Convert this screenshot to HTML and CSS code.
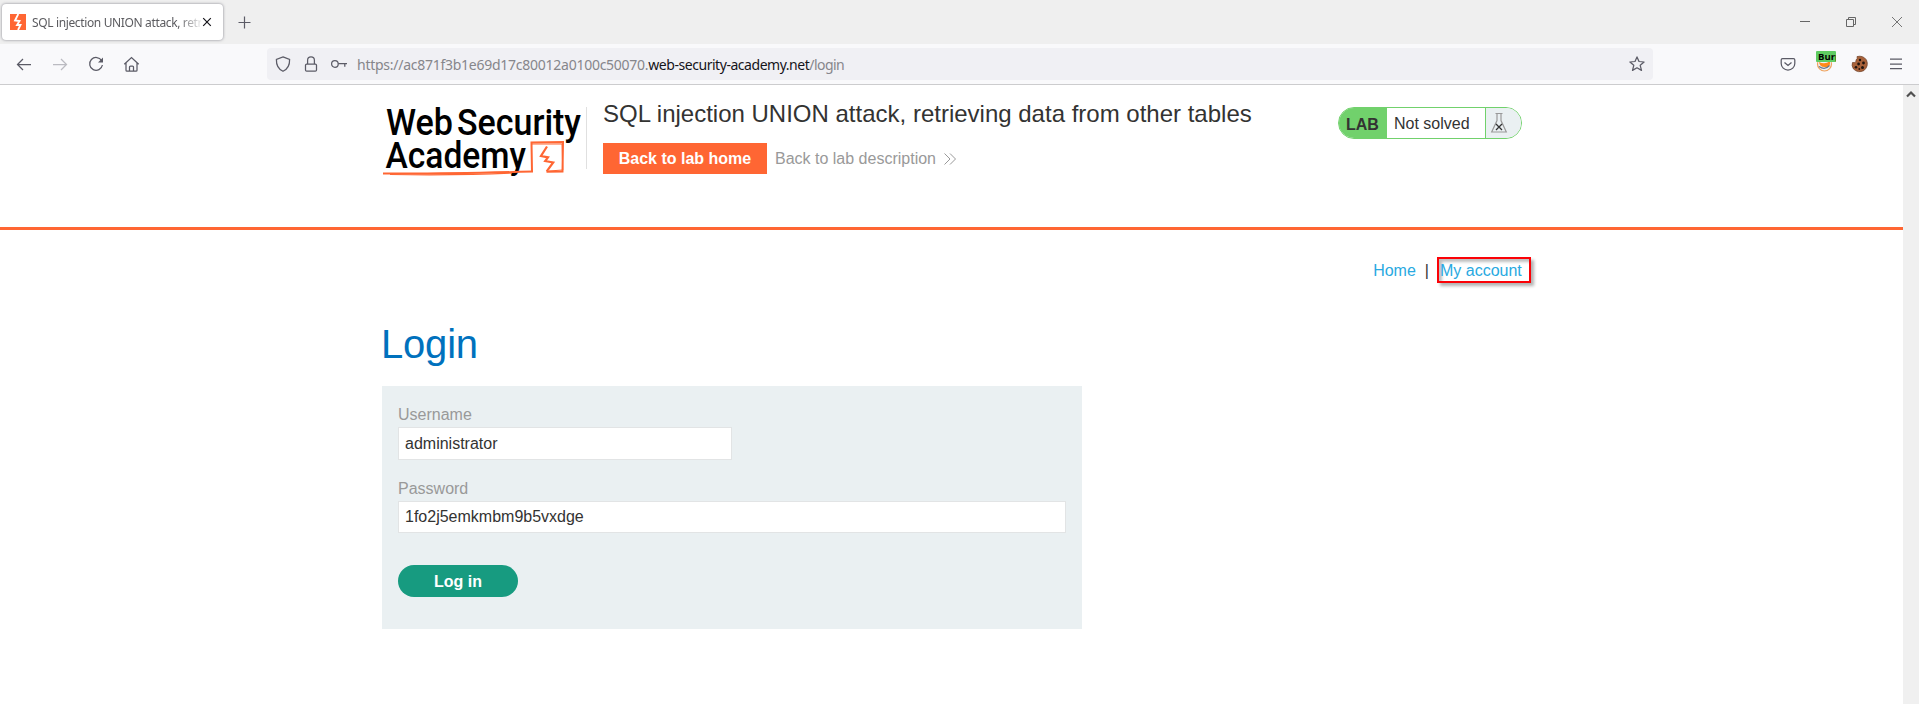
FILE: index.html
```html
<!DOCTYPE html>
<html lang="en">
<head>
<meta charset="utf-8">
<title>SQL injection UNION attack, retrieving data from other tables</title>
<link rel="stylesheet" href="styles.css">
</head>
<body>
<div class="tabbar">
  <div class="tab">
    <svg class="favicon" width="16" height="16" viewBox="0 0 16 16"><rect width="16" height="16" fill="#ff6633"/><path d="M8.300 0 5 6.500l4.500.5L7 11h3.500L8 16" fill="none" stroke="#fff" stroke-width="1.800"/></svg>
    <span class="tab-title">SQL injection UNION attack, retrieving</span>
    <svg class="tab-close" width="10" height="10" viewBox="0 0 10 10"><path d="M1.200 1.200l7.600 7.600M8.800 1.200 1.200 8.800" stroke="#15141a" stroke-width="1.200"/></svg>
  </div>
  <svg class="plus" width="13" height="13" viewBox="0 0 13 13"><path d="M6.500.5v12M.5 6.500h12" stroke="#5b5b66" stroke-width="1.200"/></svg>
  <div class="window-buttons">
    <svg width="10" height="10" viewBox="0 0 10 10"><path d="M0 4.500h10" stroke="#666"/></svg>
    <svg width="10" height="10" viewBox="0 0 10 10"><path d="M.5 2.500h7v7h-7zM2.500 2.500v-2h7v7h-2" fill="none" stroke="#666"/></svg>
    <svg width="10" height="10" viewBox="0 0 10 10"><path d="M0 0l10 10M10 0 0 10" stroke="#666" stroke-width=".9"/></svg>
  </div>
</div>
<div class="toolbar">
  <div class="nav-icons">
    <svg width="16" height="16" viewBox="0 0 16 16"><path d="M15 8.500H1.500M7 3 1.500 8.500 7 14"/></svg>
    <svg class="dim" width="16" height="16" viewBox="0 0 16 16"><path d="M1 8.500h13.500M9 3l5.500 5.500L9 14"/></svg>
    <svg width="16" height="16" viewBox="0 0 16 16"><path d="M13.600 4.600A6.400 6.400 0 1 0 14.400 9"/><path d="M15 1.500v5h-5z" fill="#5b5b66" stroke="none"/></svg>
    <svg width="16" height="16" viewBox="0 0 16 16"><path d="M.3 8.300 7.500 1.500l7.200 6.800M2 7v7.200q0 1 1 1h9q1 0 1-1V7M5.500 15v-4q0-1 1-1h2q1 0 1 1v4"/></svg>
  </div>
  <div class="urlbar">
    <div class="url-icons">
      <svg width="16" height="16" viewBox="0 0 16 16"><path d="M8 .9 14.600 3.400C14.800 9 13 12.800 8 15.300 3 12.800 1.200 9 1.400 3.400z"/></svg>
      <svg width="16" height="16" viewBox="0 0 16 16"><rect x="2.500" y="8" width="11" height="7.200" rx="1.200"/><path d="M4.600 8V4.300a3.400 3.400 0 0 1 6.800 0V8"/></svg>
      <svg width="16" height="16" viewBox="0 0 16 16"><circle cx="3.900" cy="8" r="3.300"/><path d="M7.200 7.500H16M13.800 7.500v3.300"/></svg>
    </div>
    <span class="url">https://ac871f3b1e69d17c80012a0100c50070.<b>web-security-academy.net</b><span class="path">/login</span></span>
    <svg class="star" width="16" height="16" viewBox="0 0 16 16"><path d="M8 .9l2 4.600 5.100.5-3.900 3.300 1.300 5.100L8 11.800l-4.500 2.600 1.300-5.100L.9 6 6 5.500z" stroke-linejoin="round"/></svg>
  </div>
  <div class="extensions">
    <svg width="16" height="16" viewBox="0 0 16 16"><path d="M2.500 2.600h11q1.300 0 1.300 1.300v3.600a6.800 6.600 0 0 1-13.600 0V3.900q0-1.300 1.300-1.300zM4.500 6.500 8 9.500l3.500-3"/></svg>
    <div class="burp">
      <svg width="18" height="18" viewBox="0 0 18 18"><circle cx="8.500" cy="9" r="7" fill="#eef1f7" stroke="#f0a35c" stroke-width="1.200"/><path d="M3 7q6 3 11-1v3q-1 4-5.500 3-5 0-5.500-5z" fill="#ff8a1c" stroke="none"/><path d="M3 11.500q6 4 10.500-1" stroke="#6a7688"/></svg>
      <span class="burp-badge">Burp</span>
    </div>
    <svg width="16" height="16" viewBox="0 0 16 16"><path d="M5 .6Q11-1 14.500 4 17 10 12 14.500 6 17.500 1.500 13-.8 9.500.5 6.500 4.500 7 4 4 6 2.500 5 .6z" fill="#a8623a" stroke="#6d3f27" stroke-width=".7"/><g fill="#21140f" stroke="none"><circle cx="8" cy="4" r="1.200"/><circle cx="11.500" cy="7" r="1.400"/><circle cx="6.600" cy="8" r="1.400"/><circle cx="4" cy="11.300" r="1.300"/><circle cx="10.500" cy="11.600" r="1.500"/><circle cx="7.300" cy="13" r=".9"/></g></svg>
    <svg width="16" height="16" viewBox="0 0 16 16"><path d="M2 3h12M2 8h12M2 12.500h12"/></svg>
  </div>
</div>
<div class="viewport">
  <div class="page">
    <header class="lab-header">
      <div class="container header-row">
        <svg class="logo" width="204" height="84" viewBox="0 0 204 84">
          <g class="logo-text">
            <text x="4" y="50.300" textLength="67" lengthAdjust="spacingAndGlyphs">Web</text>
            <text x="75" y="50.300" textLength="124" lengthAdjust="spacingAndGlyphs">Security</text>
            <text x="3.500" y="83" textLength="140.500" lengthAdjust="spacingAndGlyphs">Academy</text>
          </g>
          <g fill="none" stroke="#ff6633">
            <path d="M1 88.500Q60 89 151 86.500" stroke-width="2"/>
            <path d="M8 89.500Q80 90.500 130 88" stroke-width="1.200"/>
            <path d="M150 87 149.500 57.500l31.500-.5-.5 29.500-16 .3" stroke-width="2"/>
            <path d="M149 59h31l.8 26-14 1" stroke-width="1"/>
            <path d="M165 61.500l-6 9.500 7 1.300-2.800 3.700 8 1.500-6.500 8.800" stroke-width="2.200"/>
          </g>
        </svg>
        <div class="title-block">
          <h2>SQL injection UNION attack, retrieving data from other tables</h2>
          <div class="links">
            <a class="lab-home">Back to lab home</a>
            <a class="lab-desc">Back to lab description<svg width="12" height="12" viewBox="0 0 12 12"><path d="M.5.5 6 6 .5 11.500M6 .5 11.500 6 6 11.500" fill="none" stroke="#999"/></svg></a>
          </div>
        </div>
        <div class="status">
          <b>LAB</b><span>Not solved</span>
          <i><svg width="16" height="20" viewBox="0 0 16 20"><path d="M4.500.5h7M6 1v6.500L.7 19h14.600L10 7.500V1" fill="none" stroke="#999" stroke-width="1.200"/><path d="M5 11l6 6M11 11l-6 6" stroke="#333" stroke-width="1.300"/></svg></i>
        </div>
      </div>
    </header>
    <main class="container">
      <nav class="account-links"><a>Home</a><span>|</span><a class="marked">My account</a></nav>
      <h1>Login</h1>
      <form class="login">
        <label>Username</label>
        <input class="short" type="text" value="administrator">
        <label>Password</label>
        <input type="text" value="1fo2j5emkmbm9b5vxdge">
        <button type="button">Log in</button>
      </form>
    </main>
  </div>
  <div class="scrollbar"><svg width="10" height="8" viewBox="0 0 10 8"><path d="M1 6.500l4-4 4 4" fill="none" stroke="#505050" stroke-width="2.200"/></svg></div>
</div>
</body>
</html>
```
FILE: styles.css
```css
* { box-sizing: border-box; }
body { margin: 0; height: 704px; display: flex; flex-direction: column; overflow: hidden; background: #fff; font: 16px/20px "Liberation Sans", Arial, sans-serif; color: #333332; }
svg { display: block; flex: none; overflow: visible; }

.tabbar { height: 44px; flex: none; background: #efefef; display: flex; align-items: center; padding: 0 17px 0 2px; }
.tab { width: 221px; height: 36px; background: #fff; border-radius: 4px; box-shadow: 0 0 3px rgba(60,60,75,.6); display: flex; align-items: center; padding: 0 11px 0 8px; }
.tab-title { width: 169px; margin: 2px 0 0 6px; overflow: hidden; white-space: nowrap; font: 12px/20px "Noto Sans", "Open Sans", sans-serif; letter-spacing: -.36px; color: #5b5b5f; -webkit-mask-image: linear-gradient(to right, #000 146px, transparent 172px); mask-image: linear-gradient(to right, #000 146px, transparent 172px); }
.tab-close { margin-left: 1px; }
.plus { margin-left: 15px; }
.window-buttons { margin-left: auto; display: flex; gap: 36px; }

.toolbar { height: 41px; flex: none; background: #f9f9fb; border-bottom: 1px solid #ccccce; display: flex; align-items: center; padding: 0 15px 0 16px; }
.toolbar svg { fill: none; stroke: #5b5b66; stroke-width: 1.25; }
.toolbar .dim { stroke: #bbbbc1; }
.nav-icons { display: flex; gap: 20px; width: 251px; }
.urlbar { width: 1386px; height: 32px; background: #f0f0f4; border-radius: 4px; display: flex; align-items: center; padding: 0 8px; }
.url-icons { display: flex; gap: 12px; width: 82px; }
.url { font: 14px/20px "Noto Sans", "Open Sans", sans-serif; letter-spacing: -.26px; color: #86868b; white-space: nowrap; margin-top: 2px; }
.url b { font-weight: 400; color: #15141a; letter-spacing: -.46px; }
.path { letter-spacing: -.55px; }
.star { margin-left: auto; }
.extensions { margin-left: auto; display: flex; align-items: center; gap: 20px; }
.burp { position: relative; width: 16px; }
.burp-badge { position: absolute; left: 0; top: -4px; width: 20px; height: 11px; padding-left: 2px; overflow: hidden; background: #5fcc62; border-radius: 1px; color: #000; font: bold 9.5px/11px "Open Sans", sans-serif; }

.viewport { flex: 1; display: flex; min-height: 0; }
.page { flex: 1; }
.scrollbar { width: 16px; background: #f0f0f0; padding: 5px 3px; }
.container { width: 1140px; margin: 0 0 0 382px; }
.lab-header { height: 145px; border-bottom: 3px solid #ff6633; }
.header-row { display: flex; align-items: flex-start; }
.logo { height: 84px; }
.logo-text { font: 500 37.500px Roboto, sans-serif; fill: #000; }
.title-block { margin-top: 22px; padding-left: 16px; height: 62px; border-left: 1px solid #e0e0e0; }
h2 { margin: -8px 0 14px; font-size: 24px; line-height: 30px; font-weight: 400; white-space: nowrap; }
.links { display: flex; align-items: center; }
.lab-home { width: 164px; height: 31px; line-height: 31px; text-align: center; background: #ff6633; color: #fff; font-weight: 700; }
.lab-desc { display: flex; align-items: center; gap: 8px; margin-left: 8px; color: #999; white-space: nowrap; }
.status { margin: 22px 0 0 auto; width: 184px; height: 32px; display: flex; border: 1px solid #71d16c; border-radius: 16px; overflow: hidden; line-height: 31px; }
.status b { width: 48px; padding-left: 7px; line-height: 33px; background: #71d16c; }
.status span { flex: 1; padding-left: 7px; }
.status i { width: 36px; padding: 5px; background: #eaf0f2; border-left: 1px solid #71d16c; }

.account-links { display: flex; justify-content: flex-end; align-items: center; height: 26px; margin: 27px -9px 0 0; color: #29a9e1; }
.account-links a:first-child, .account-links span { padding-top: 2px; }
.account-links span { margin: 0 8px 0 9px; color: #333332; }
.marked { width: 94px; height: 26px; line-height: 24px; padding-left: 1px; border: 2px solid #fb0207; box-shadow: 3px 3px 3px rgba(0,0,0,.3), inset 3px 3px 3px rgba(0,0,0,.25); }
h1 { margin: 38px 0 19px -1px; font-size: 40px; line-height: 46px; font-weight: 400; letter-spacing: -.2px; color: #0071bd; }
.login { width: 700px; height: 243px; background: #eaf0f2; padding: 18px 16px 0; }
.login label { display: block; height: 23px; line-height: 22px; color: #999; }
.login input { display: block; width: 668px; height: 32px; margin: 0 0 32px; padding: 0 6px; border: 1px solid #e2e4e5; background: #fff; font: inherit; color: #333332; }
.login .short { width: 334px; height: 33px; margin-bottom: 18px; }
.login button { display: block; width: 120px; height: 32px; border: 0; padding: 1px 0 0; border-radius: 16px; background: #179b80; color: #fff; font: bold 16px "Liberation Sans", Arial, sans-serif; }
```
